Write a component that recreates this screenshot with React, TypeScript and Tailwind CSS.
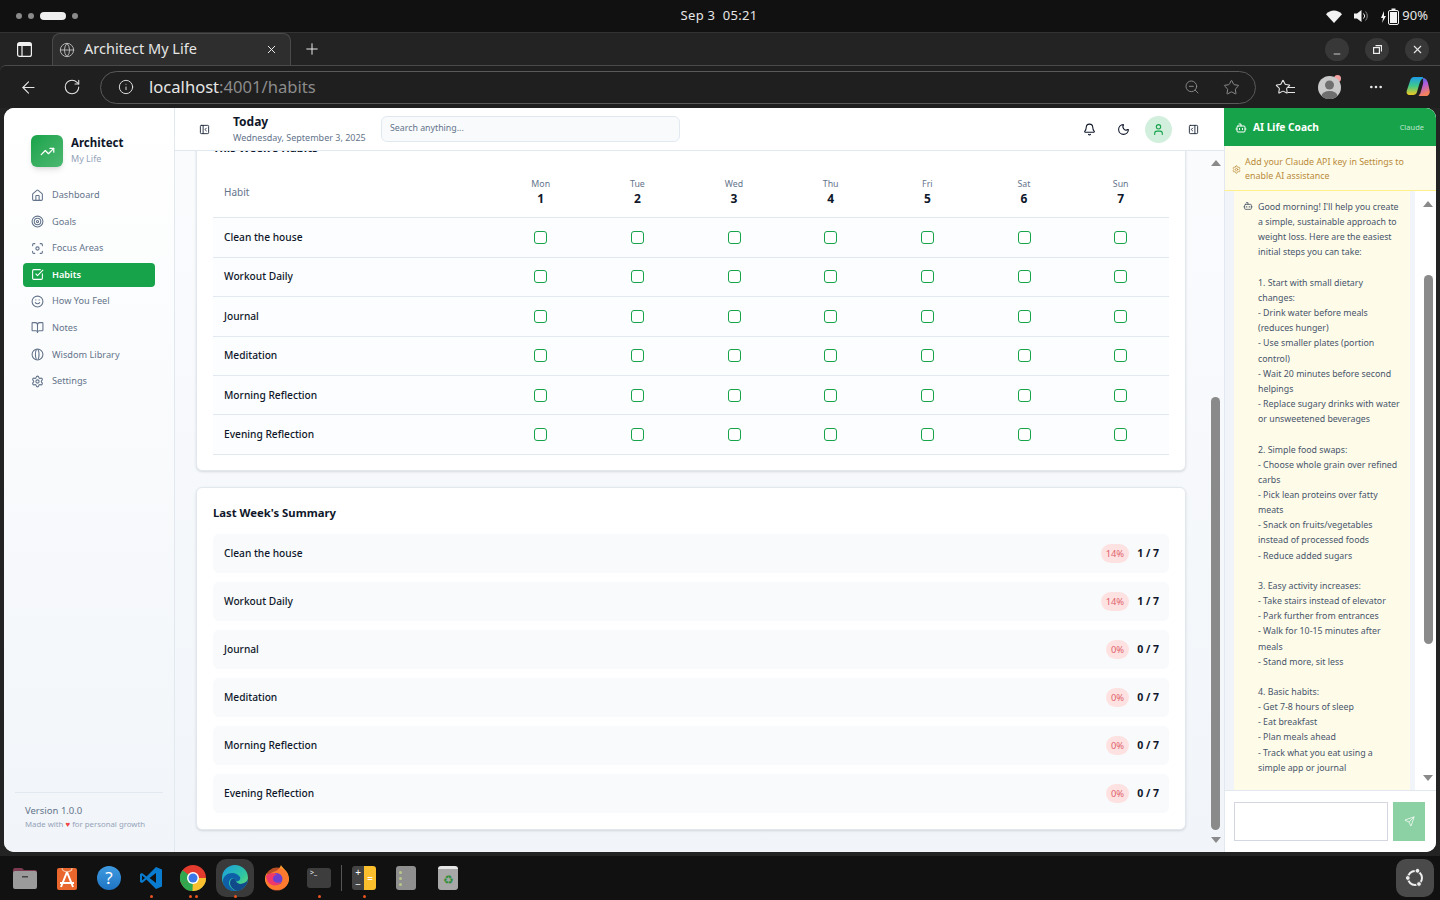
import {
  ArrowLeft,
  Bell,
  BookOpen,
  Bot,
  Focus,
  Globe,
  Home,
  Info,
  Minus,
  Moon,
  MoreHorizontal,
  PanelLeftClose,
  PanelRightOpen,
  Plus,
  RotateCw,
  Send,
  Settings,
  Smile,
  SquareCheckBig,
  Star,
  Target,
  TrendingUp,
  User,
  X,
  ZoomOut,
} from "lucide-react"

function WisdomIcon({ size = 13 }: { size?: number }) {
  return (
    <svg width={size} height={size} viewBox="0 0 24 24" fill="none" stroke="currentColor" strokeWidth="2">
      <circle cx="12" cy="12" r="10" />
      <path d="M10 2.500c-2.500 5-2.500 14 0 19M13 2.500c2 5 2 14 0 19" />
    </svg>
  )
}

const nav = [
  { label: "Dashboard", icon: Home },
  { label: "Goals", icon: Target },
  { label: "Focus Areas", icon: Focus },
  { label: "Habits", icon: SquareCheckBig, active: true },
  { label: "How You Feel", icon: Smile },
  { label: "Notes", icon: BookOpen },
  { label: "Wisdom Library", icon: WisdomIcon },
  { label: "Settings", icon: Settings },
]

const days = [
  { name: "Mon", num: 1 },
  { name: "Tue", num: 2 },
  { name: "Wed", num: 3 },
  { name: "Thu", num: 4 },
  { name: "Fri", num: 5 },
  { name: "Sat", num: 6 },
  { name: "Sun", num: 7 },
]

const habits = ["Clean the house", "Workout Daily", "Journal", "Meditation", "Morning Reflection", "Evening Reflection"]

const summary = [
  { name: "Clean the house", pct: "14%", count: "1 / 7" },
  { name: "Workout Daily", pct: "14%", count: "1 / 7" },
  { name: "Journal", pct: "0%", count: "0 / 7" },
  { name: "Meditation", pct: "0%", count: "0 / 7" },
  { name: "Morning Reflection", pct: "0%", count: "0 / 7" },
  { name: "Evening Reflection", pct: "0%", count: "0 / 7" },
]

const chatLines = [
  "Good morning! I'll help you create",
  "a simple, sustainable approach to",
  "weight loss. Here are the easiest",
  "initial steps you can take:",
  "",
  "1. Start with small dietary",
  "changes:",
  "- Drink water before meals",
  "(reduces hunger)",
  "- Use smaller plates (portion",
  "control)",
  "- Wait 20 minutes before second",
  "helpings",
  "- Replace sugary drinks with water",
  "or unsweetened beverages",
  "",
  "2. Simple food swaps:",
  "- Choose whole grain over refined",
  "carbs",
  "- Pick lean proteins over fatty",
  "meats",
  "- Snack on fruits/vegetables",
  "instead of processed foods",
  "- Reduce added sugars",
  "",
  "3. Easy activity increases:",
  "- Take stairs instead of elevator",
  "- Park further from entrances",
  "- Walk for 10-15 minutes after",
  "meals",
  "- Stand more, sit less",
  "",
  "4. Basic habits:",
  "- Get 7-8 hours of sleep",
  "- Eat breakfast",
  "- Plan meals ahead",
  "- Track what you eat using a",
  "simple app or journal",
]

function Arrow({ down }: { down?: boolean }) {
  return (
    <svg width="10" height="6" viewBox="0 0 10 6" className="shrink-0">
      <path d={down ? "M0 0h10L5 6z" : "M0 6h10L5 0z"} fill="#8a8a8a" />
    </svg>
  )
}

function DockApp({ children, dots = 0, active }: { children: React.ReactNode; dots?: number; active?: boolean }) {
  return (
    <div className="relative flex h-[38px] w-[42px] items-center justify-center">
      <div className={`flex h-[38px] w-[38px] items-center justify-center rounded-[10px] ${active ? "bg-[#3a3a3a]" : ""}`}>
        {children}
      </div>
      {dots > 0 && (
        <div className="absolute bottom-[-1px] flex gap-[3px]">
          {Array.from({ length: dots }).map((_, i) => (
            <span key={i} className="h-[3px] w-[3px] rounded-full bg-[#e95420]" />
          ))}
        </div>
      )}
    </div>
  )
}

function StatusBar() {
  return (
    <div className="flex h-8 shrink-0 items-center justify-between bg-[#111111] pl-4 pr-3 text-[13px] text-[#e6e6e6]">
      <div className="flex w-[300px] items-center gap-[6px]">
        <span className="h-[6px] w-[6px] rounded-full bg-[#8a8a8a]" />
        <span className="h-[6px] w-[6px] rounded-full bg-[#8a8a8a]" />
        <span className="h-[8px] w-[26px] rounded-full bg-[#eeeeee]" />
        <span className="h-[6px] w-[6px] rounded-full bg-[#8a8a8a]" />
      </div>
      <div className="mb-[1px] ml-[-6px] tracking-[0.3px]">Sep 3&nbsp; 05:21</div>
      <div className="flex w-[300px] items-center justify-end">
        <svg width="16" height="13" viewBox="0 0 16 13" className="mr-[12px]">
          <path d="M0 4.200C4.500 -0.800 11.500 -0.800 16 4.200L8 13z" fill="#f2f2f2" />
        </svg>
        <svg width="15" height="14" viewBox="0 0 15 14" className="mr-[11px]" fill="none">
          <path d="M0 4.500h3L7.500 1v12L3 9.500H0z" fill="#f2f2f2" />
          <path d="M9.500 4.500a3.500 3.500 0 0 1 0 5" stroke="#f2f2f2" />
          <path d="M11.500 2.500a6.500 6.500 0 0 1 0 9" stroke="#8a8a8a" />
        </svg>
        <svg width="21" height="17" viewBox="0 0 21 17" className="mr-[1px]">
          <path d="M4 3 1 10h2l-1 5 4-7H4z" fill="#f2f2f2" />
          <rect x="8.500" y="2.500" width="10" height="14" rx="1.500" fill="none" stroke="#f2f2f2" />
          <rect x="10" y="4" width="7" height="11" fill="#f2f2f2" />
          <rect x="11.500" y="0.500" width="4" height="2" fill="#f2f2f2" />
        </svg>
        <span>90%</span>
      </div>
    </div>
  )
}

function TabBar() {
  return (
    <div className="flex h-[33px] shrink-0 items-end border-t border-[#333333] bg-[#232323] pr-[11px] text-[#e6e6e6]">
      <div className="flex h-full w-[52px] items-center justify-center pr-[4px]">
        <svg width="15" height="15" viewBox="0 0 15 15" fill="none" stroke="#f0f0f0" strokeWidth="1.200">
          <rect x="0.600" y="0.600" width="13.800" height="13.800" rx="2" />
          <path d="M0.600 3.500h13.800M5 3.500v10.900" />
          <rect x="1" y="1" width="13" height="2.500" fill="#f0f0f0" stroke="none" />
        </svg>
      </div>
      <div className="flex h-[32px] w-[239px] items-center rounded-t-[8px] border border-b-0 border-[#4a4a4a] bg-[#2e2e2e] pl-[6px] pr-[12px]">
        <Globe size={16} strokeWidth={1.4} className="text-[#bdbdbd]" />
        <span className="mb-[2px] ml-[9px] flex-1 text-[14.500px]">Architect My Life</span>
        <X size={13} strokeWidth={1.8} className="text-[#f0f0f0]" />
      </div>
      <div className="flex h-full w-[42px] items-center justify-center">
        <Plus size={18} strokeWidth={1.3} className="text-[#f0f0f0]" />
      </div>
      <div className="flex h-full flex-1 items-center justify-end gap-[16px]">
        <div className="flex h-[23px] w-[24px] items-end justify-center rounded-full bg-[#383838] pb-[2px]">
          <Minus size={10} strokeWidth={2} />
        </div>
        <div className="flex h-[23px] w-[24px] items-center justify-center rounded-full bg-[#383838]">
          <svg width="9" height="9" viewBox="0 0 9 9" fill="none" stroke="#eeeeee" strokeWidth="1.200">
            <rect x="0.600" y="2.600" width="5.800" height="5.800" />
            <path d="M2.500 0.600h6v6" />
          </svg>
        </div>
        <div className="flex h-[23px] w-[24px] items-center justify-center rounded-full bg-[#383838]">
          <X size={13} strokeWidth={2} />
        </div>
      </div>
    </div>
  )
}

function AddressBar() {
  return (
    <div className="flex h-[43px] shrink-0 items-center rounded-tl-[6px] border-t border-[#4a4a4a] bg-[#1f1f1f] text-[#e6e6e6]">
      <div className="flex w-[100px] items-center pl-[19px]">
        <ArrowLeft size={19} strokeWidth={1.4} />
        <RotateCw size={18} strokeWidth={1.4} className="ml-[25px]" />
      </div>
      <div className="flex h-[33px] w-[1156px] items-center rounded-full border border-[#5a5a5a] pl-[17px] pr-[15px]">
        <Info size={16} strokeWidth={1.4} />
        <span className="ml-[15px] flex-1 text-[16.600px]">
          localhost<span className="text-[#8c8c8c]">:4001/habits</span>
        </span>
        <ZoomOut size={16} strokeWidth={1.4} className="text-[#8c8c8c]" />
        <Star size={17} strokeWidth={1.4} className="ml-[23px] text-[#8c8c8c]" />
      </div>
      <div className="flex flex-1 items-center pl-[19px]">
        <div className="relative">
          <Star size={16} strokeWidth={1.6} />
          <span className="absolute bottom-[2px] right-[-4px] h-[6px] w-[7px] border-y border-[#e6e6e6] bg-[#1f1f1f]" />
        </div>
        <div className="relative ml-[27px] flex h-[23px] w-[23px] items-end justify-center overflow-hidden rounded-full bg-[#c9c9c9]">
          <svg width="23" height="23" viewBox="0 0 23 23" fill="#6f6f6f">
            <circle cx="11.500" cy="9" r="4.500" />
            <ellipse cx="11.500" cy="20" rx="8" ry="5" />
          </svg>
        </div>
        <span className="mb-[18px] ml-[-7px] h-[7px] w-[7px] rounded-full bg-[#f4a3a3]" />
        <MoreHorizontal size={16} className="ml-[27px]" />
        <svg width="24" height="22" viewBox="0 0 24 22" className="ml-[22px]">
          <defs>
            <linearGradient id="cpa" x1="0" y1="0" x2="0" y2="1">
              <stop offset="0" stopColor="#1e9be8" />
              <stop offset="0.5" stopColor="#3fc98a" />
              <stop offset="1" stopColor="#f2c81f" />
            </linearGradient>
            <linearGradient id="cpc" x1="0" y1="0" x2="0.300" y2="1">
              <stop offset="0" stopColor="#2a6fe0" />
              <stop offset="0.450" stopColor="#b05be0" />
              <stop offset="1" stopColor="#f5825a" />
            </linearGradient>
          </defs>
          <path d="M8 1h8c1 0 1.500.5 1 1.500C15 3 14 6 13 9l-2 7c-.5 2-2 3-4 3H4c-3 0-4-2-3-5L4 5c1-3 2-4 4-4z" fill="url(#cpa)" />
          <path d="M17 2c3 0 4 2 5 5l1.500 7c1 3-1 6-3 6h-7c-1 0-1-.5-.5-1 1-1 1.500-2 2-4l2-7c.3-2 0-3 0-6z" fill="url(#cpc)" />
        </svg>
      </div>
    </div>
  )
}

function Sidebar() {
  return (
    <aside className="flex w-[171px] shrink-0 flex-col border-r border-[#e2e8f0] bg-gradient-to-b from-white to-[#f1f5f9]">
      <div className="flex items-center gap-2 pl-[27px] pt-[27px]">
        <div className="flex h-8 w-8 items-center justify-center rounded-md bg-gradient-to-br from-[#16a34a] to-[#4bb871] shadow-md">
          <TrendingUp size={15} className="text-white" />
        </div>
        <div className="mt-[-1px]">
          <div className="text-[11.500px] font-bold leading-[16px] text-[#0f172a]">Architect</div>
          <div className="mt-[1px] text-[9px] leading-[14px] text-[#94a3b8]">My Life</div>
        </div>
      </div>
      <nav className="flex flex-col gap-[2.600px] px-[19px] pt-[16px]">
        {nav.map((item) => (
          <div
            key={item.label}
            className={`flex h-6 items-center gap-[8px] rounded-[4px] px-2 text-[9.200px] ${
              item.active ? "bg-[#16a34a] font-semibold text-white" : "text-[#64748b]"
            }`}
          >
            <item.icon size={13} />
            {item.label}
          </div>
        ))}
      </nav>
      <div className="mx-[11px] mt-auto border-t border-[#e2e8f0] px-[10px] pb-[22px] pt-[11px]">
        <div className="text-[9.500px] leading-[13px] text-[#64748b]">Version 1.0.0</div>
        <div className="mt-[1px] whitespace-nowrap text-[7.800px] leading-[12px] text-[#94a3b8]">
          Made with <span className="text-[#ef4444]">♥</span> for personal growth
        </div>
      </div>
    </aside>
  )
}

function Header() {
  return (
    <header className="relative z-10 flex h-[43px] shrink-0 items-center border-b border-[#e2e8f0] bg-white pl-[24px] pr-[25px]">
      <PanelLeftClose size={11} className="text-[#1e293b]" />
      <div className="ml-[23px] w-[148px]">
        <div className="text-[12px] font-bold leading-[15px] text-[#0f172a]">Today</div>
        <div className="mt-[2px] whitespace-nowrap text-[9px] leading-[14px] text-[#64748b]">Wednesday, September 3, 2025</div>
      </div>
      <div className="flex h-[26px] w-[299px] items-center rounded-md border border-[#e2e8f0] bg-[#f8fafc] px-2 text-[8.800px] text-[#64748b]">
        Search anything...
      </div>
      <div className="ml-auto flex items-center">
        <Bell size={13} className="text-[#0f172a]" />
        <Moon size={13} className="ml-[21px] text-[#0f172a]" />
        <div className="ml-[15px] flex h-[27px] w-[27px] items-center justify-center rounded-full bg-[#d1efdc]">
          <User size={13} className="text-[#16a34a]" />
        </div>
        <PanelRightOpen size={11} className="ml-[16px] text-[#1e293b]" />
      </div>
    </header>
  )
}

function HabitTable() {
  return (
    <section className="rounded-md border border-[#e2e8f0] bg-white px-4 pb-[15.600px] shadow-sm">
      <h2 className="h-[25px] text-[11.300px] font-bold leading-[14px] text-[#0f172a]">This Week's Habits</h2>
      <div className="grid h-[52.400px] grid-cols-[279.400px_repeat(7,1fr)] items-center border-b border-[#e2e8f0]">
        <div className="mt-[1px] pl-[11px] text-[10px] text-[#64748b]">Habit</div>
        {days.map((d) => (
          <div key={d.name} className="text-center">
            <div className="text-[8.800px] leading-[14px] text-[#64748b]">{d.name}</div>
            <div className="text-[12px] font-bold leading-[16px] text-[#0f172a]">{d.num}</div>
          </div>
        ))}
      </div>
      {habits.map((h) => (
        <div
          key={h}
          className="grid h-[39.400px] grid-cols-[279.400px_repeat(7,1fr)] items-center border-b border-[#e2e8f0] bg-[#fcfdfe]"
        >
          <div className="pl-[11px] text-[10.200px] font-medium text-[#0f172a]">{h}</div>
          {days.map((d) => (
            <div key={d.name} className="flex justify-center">
              <span className="h-[13px] w-[13px] rounded-[3px] border border-[#16a34a] bg-white" />
            </div>
          ))}
        </div>
      ))}
    </section>
  )
}

function Summary() {
  return (
    <section className="rounded-md border border-[#e2e8f0] bg-white px-4 pb-4 pt-[17px] shadow-sm">
      <h2 className="text-[11.300px] font-bold leading-[16px] text-[#0f172a]">Last Week's Summary</h2>
      <div className="mt-[13px] flex flex-col gap-[9px]">
        {summary.map((s) => (
          <div key={s.name} className="flex h-[39px] items-center rounded-md bg-[#f8fafc] pl-[11px] pr-[10px]">
            <span className="flex-1 text-[10.200px] font-medium text-[#0f172a]">{s.name}</span>
            <span className="flex h-[19px] items-center rounded-full bg-[#fee2e2] px-[5px] text-[9.400px] text-[#e0626c]">
              {s.pct}
            </span>
            <span className="ml-2 text-[10.500px] font-bold text-[#0f172a]">{s.count}</span>
          </div>
        ))}
      </div>
    </section>
  )
}

function Chat() {
  return (
    <aside className="flex w-[212px] shrink-0 flex-col overflow-hidden bg-white">
      <div className="flex h-[38px] shrink-0 items-center bg-[#16a34a] pl-[11px] pr-[12px] pt-[1px] text-white">
        <Bot size={12} />
        <span className="ml-[6px] flex-1 text-[10.200px] font-bold">AI Life Coach</span>
        <span className="text-[7.500px] text-[#bfe6cd]">Claude</span>
      </div>
      <div className="flex h-[45px] shrink-0 items-center gap-[4px] border-b border-l border-[#fef08a] border-l-[#e2e8f0] bg-[#fefce8] pl-[7px] pr-[3px] pt-[2px] text-[8.900px] leading-[14px] text-[#b98a3a]">
        <Settings size={9} className="shrink-0" />
        <div className="whitespace-nowrap">
          Add your Claude API key in Settings to
          <br />
          enable AI assistance
        </div>
      </div>
      <div className="flex min-h-0 flex-1 border-l border-[#e2e8f0]">
        <div className="min-w-0 flex-1 overflow-hidden bg-[#f1f5f9] pl-[9px]">
          <div className="flex h-full w-[176px] bg-[#fefbe9] pl-[9px] pt-[9px]">
            <Bot size={10} className="mr-[5px] mt-[1px] shrink-0 text-[#475569]" />
            <div className="text-[8.800px] leading-[15.160px] text-[#475569]">
              {chatLines.map((line, i) => (
                <div key={i} className="h-[15.160px] whitespace-nowrap">
                  {line}
                </div>
              ))}
            </div>
          </div>
        </div>
        <div className="flex w-[21px] shrink-0 flex-col items-center pl-[5px] pt-[10px]">
          <Arrow />
          <div className="mt-[68px] h-[369px] w-[9px] rounded-full bg-[#8a8a8a]" />
          <div className="mt-auto pb-[9px]">
            <Arrow down />
          </div>
        </div>
      </div>
      <div className="flex h-[62px] shrink-0 gap-[5px] border-l border-t border-[#e2e8f0] pl-[9px] pt-[11px]">
        <div className="h-[39px] w-[154px] border border-[#d4d7e2] bg-white" />
        <div className="flex h-[39px] w-[32px] items-center justify-center bg-[#8bd1a3]">
          <Send size={11} className="text-white" strokeWidth={1.6} />
        </div>
      </div>
    </aside>
  )
}

function Dock() {
  return (
    <div className="flex h-[44px] shrink-0 items-center justify-between bg-[#111111] pl-1 pr-[6px]">
      <div className="flex items-center">
        <DockApp>
          <svg width="26" height="24" viewBox="0 0 26 24">
            <path d="M1 4a2 2 0 0 1 2-2h7l2 2h11a2 2 0 0 1 2 2v3H1z" fill="#7b3a4f" />
            <rect x="1" y="5" width="24" height="18" rx="2" fill="#9b9b9b" />
            <rect x="10" y="10" width="6" height="1.500" fill="#444444" />
          </svg>
        </DockApp>
        <DockApp>
          <svg width="20" height="24" viewBox="0 0 20 24">
            <rect y="2" width="20" height="22" rx="2" fill="#e9662c" />
            <path d="M5 2c0 5 10 5 10 0" fill="none" stroke="#f6c6a8" strokeWidth="1.200" />
            <path d="M10 6 4 21M10 6l6 15M3 17h14" stroke="#ffffff" strokeWidth="2" fill="none" />
          </svg>
        </DockApp>
        <DockApp>
          <div className="flex h-6 w-6 items-center justify-center rounded-full bg-gradient-to-b from-[#3f9be0] to-[#1e74c4] text-[17px] text-white">
            ?
          </div>
        </DockApp>
        <DockApp dots={1}>
          <svg width="24" height="24" viewBox="0 0 24 24">
            <path d="M17 1 7.500 10.500 3 7 1 8v8l2 1 4.500-3.500L17 23l6-2.500v-17z" fill="#0a7ccf" />
            <path d="M17 7v10l-6.500-5z" fill="#111111" />
            <path d="M3 9.500v5L6 12z" fill="#111111" />
          </svg>
        </DockApp>
        <DockApp dots={2}>
          <svg width="26" height="26" viewBox="0 0 26 26">
            <circle cx="13" cy="13" r="13" fill="#e33b2e" />
            <path d="M13 13 1.700 19.500A13 13 0 0 1 2.500 5.300z" fill="#2fa84f" />
            <path d="M13 13h13a13 13 0 0 1-13 13 12 12 0 0 1-11.300-6.500z" fill="#2fa84f" />
            <path d="M13 13h13a13 13 0 0 1-13.500 13z" fill="#fbc02d" />
            <circle cx="13" cy="13" r="6" fill="#ffffff" />
            <circle cx="13" cy="13" r="4.500" fill="#3b78e7" />
          </svg>
        </DockApp>
        <DockApp dots={1} active>
          <svg width="26" height="26" viewBox="0 0 26 26">
            <defs>
              <linearGradient id="edg" x1="0" y1="0" x2="1" y2="1">
                <stop offset="0" stopColor="#1b9de2" />
                <stop offset="0.600" stopColor="#2fc7a0" />
                <stop offset="1" stopColor="#7fe06b" />
              </linearGradient>
            </defs>
            <circle cx="13" cy="13" r="13" fill="url(#edg)" />
            <path d="M1 15C2 8 13 5 18 12c1 3-2 5-4 4-1-4-7-4-7 2 0 3 3 7 8 8C7 27 0 22 1 15z" fill="#0f5fa8" />
            <path d="M26 14c0 6-6 12-11 12-3-1-7-4-7-8 0-5 5-6 6-2 2 4 6 3 8 2 2-1 3-2 4-4z" fill="#114a8b" />
          </svg>
        </DockApp>
        <DockApp>
          <svg width="26" height="26" viewBox="0 0 26 26">
            <path d="M17 0c1 3 8 6 8 14 0 6-5 11-12 11S1 20 1 14c0-3 1-5 2-6 0 2 1 3 2 3 1-3 4-4 7-5 2-1 4-3 5-6z" fill="#ffa02e" />
            <circle cx="13" cy="14" r="11.500" fill="#ff6a2f" opacity="0.700" />
            <circle cx="12.500" cy="14" r="6" fill="#6f3fd0" />
            <path d="M2 11c2-3 8-4 11-1-3 0-4 2-4 4 0 3 4 5 8 3-3 5-10 4-13 0-1-2-2-4-2-6z" fill="#f0386b" />
          </svg>
        </DockApp>
        <DockApp dots={1}>
          <div className="h-[20px] w-[24px] rounded-[3px] bg-[#3d3d3d] pl-[3px] text-[7px] leading-[10px] text-[#eeeeee]">
            &gt;_
          </div>
        </DockApp>
        <div className="mx-[1px] h-[26px] w-px bg-[#555555]" />
        <DockApp dots={1}>
          <div className="flex h-[24px] w-[24px] overflow-hidden rounded-[3px] text-[10px] leading-[12px]">
            <div className="flex w-1/2 flex-col items-center justify-center bg-[#444444] text-white">
              <span>+</span>
              <span>−</span>
            </div>
            <div className="flex w-1/2 items-center justify-center bg-[#fbbf2d] text-white">=</div>
          </div>
        </DockApp>
        <DockApp>
          <div className="flex h-[24px] w-[20px] flex-col justify-center gap-[3px] rounded-[3px] bg-[#8f8f8f] pl-[3px]">
            <span className="h-[3px] w-[3px] rounded-full bg-[#b9c98a]" />
            <span className="h-[3px] w-[3px] rounded-full bg-[#b9c98a]" />
            <span className="h-[3px] w-[3px] rounded-full bg-[#b9c98a]" />
          </div>
        </DockApp>
        <DockApp>
          <div className="flex h-[24px] w-[20px] items-center justify-center rounded-[3px] border-t-[3px] border-[#e5e5e5] bg-[#a8a8a8] text-[12px] leading-none text-[#2f8f3a]">
            ♻
          </div>
        </DockApp>
      </div>
      <div className="flex h-[38px] w-[38px] items-center justify-center rounded-[10px] bg-[#4a4a4a]">
        <svg width="20" height="20" viewBox="0 0 20 20" fill="none">
          <circle cx="10" cy="10" r="7" stroke="#eeeeee" strokeWidth="2" />
          <circle cx="12.500" cy="2.800" r="2.400" fill="#eeeeee" stroke="#4a4a4a" />
          <circle cx="2.800" cy="10" r="2.400" fill="#eeeeee" stroke="#4a4a4a" />
          <circle cx="14" cy="16" r="2.400" fill="#eeeeee" stroke="#4a4a4a" />
        </svg>
      </div>
    </div>
  )
}

export default function App() {
  return (
    <div className="flex h-[900px] w-[1440px] flex-col overflow-hidden bg-[#232323] font-['Noto_Sans',sans-serif]">
      <StatusBar />
      <TabBar />
      <AddressBar />
      <div className="mx-1 mb-1 flex min-h-0 flex-1 overflow-hidden rounded-[10px] bg-white">
        <Sidebar />
        <div className="flex min-w-0 flex-1 flex-col bg-gradient-to-b from-[#fbfcfe] to-[#f1f5f9]">
          <Header />
          <div className="flex min-h-0 flex-1">
            <main className="min-w-0 flex-1 overflow-hidden px-[21px]">
              <div className="mt-[-11px] flex flex-col gap-[16px]">
                <HabitTable />
                <Summary />
              </div>
            </main>
            <div className="flex w-[17px] shrink-0 flex-col items-center pt-[9px]">
              <Arrow />
              <div className="mt-[231px] h-[433px] w-[9px] rounded-full bg-[#8a8a8a]" />
              <div className="mt-auto pb-[9px]">
                <Arrow down />
              </div>
            </div>
          </div>
        </div>
        <Chat />
      </div>
      <Dock />
    </div>
  )
}
